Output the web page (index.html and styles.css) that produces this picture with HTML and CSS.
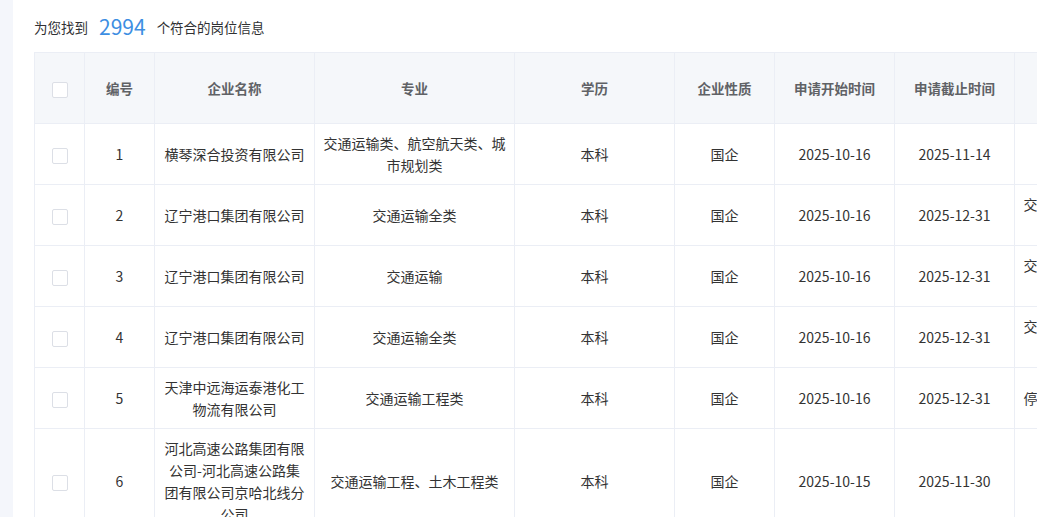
FILE: index.html
```html
<!DOCTYPE html>
<html lang="zh-CN">
<head>
<meta charset="utf-8">
<title>岗位信息</title>
<link rel="stylesheet" href="styles.css">
</head>
<body>
<div class="page">
  <div class="side"></div>
  <div class="main">
    <div class="summary">为您找到<span class="count">2994</span>个符合的岗位信息</div>
    <div class="table-wrap">
      <table class="grid">
        <colgroup>
          <col class="c-check"><col class="c-no"><col class="c-name"><col class="c-major"><col class="c-edu"><col class="c-type"><col class="c-date"><col class="c-date"><col class="c-extra">
        </colgroup>
        <thead>
          <tr>
            <th><span class="checkbox"></span></th>
            <th>编号</th>
            <th>企业名称</th>
            <th>专业</th>
            <th>学历</th>
            <th>企业性质</th>
            <th>申请开始时间</th>
            <th>申请截止时间</th>
            <th class="extra-head"></th>
          </tr>
        </thead>
        <tbody>
          <tr>
            <td><span class="checkbox"></span></td>
            <td>1</td>
            <td>横琴深合投资有限公司</td>
            <td>交通运输类、航空航天类、城市规划类</td>
            <td>本科</td>
            <td>国企</td>
            <td>2025-10-16</td>
            <td>2025-11-14</td>
            <td class="extra"></td>
          </tr>
          <tr>
            <td><span class="checkbox"></span></td>
            <td>2</td>
            <td>辽宁港口集团有限公司</td>
            <td>交通运输全类</td>
            <td>本科</td>
            <td>国企</td>
            <td>2025-10-16</td>
            <td>2025-12-31</td>
            <td class="extra">交通运输类相关专业优先，具备驾驶证</td>
          </tr>
          <tr>
            <td><span class="checkbox"></span></td>
            <td>3</td>
            <td>辽宁港口集团有限公司</td>
            <td>交通运输</td>
            <td>本科</td>
            <td>国企</td>
            <td>2025-10-16</td>
            <td>2025-12-31</td>
            <td class="extra">交通运输类相关专业优先，具备驾驶证</td>
          </tr>
          <tr>
            <td><span class="checkbox"></span></td>
            <td>4</td>
            <td>辽宁港口集团有限公司</td>
            <td>交通运输全类</td>
            <td>本科</td>
            <td>国企</td>
            <td>2025-10-16</td>
            <td>2025-12-31</td>
            <td class="extra">交通运输类相关专业优先，具备驾驶证</td>
          </tr>
          <tr>
            <td><span class="checkbox"></span></td>
            <td>5</td>
            <td>天津中远海运泰港化工物流有限公司</td>
            <td>交通运输工程类</td>
            <td>本科</td>
            <td>国企</td>
            <td>2025-10-16</td>
            <td>2025-12-31</td>
            <td class="extra">停车场管理及危险品运输岗位</td>
          </tr>
          <tr>
            <td><span class="checkbox"></span></td>
            <td>6</td>
            <td>河北高速公路集团有限公司-河北高速公路集团有限公司京哈北线分公司</td>
            <td>交通运输工程、土木工程类</td>
            <td>本科</td>
            <td>国企</td>
            <td>2025-10-15</td>
            <td>2025-11-30</td>
            <td class="extra"></td>
          </tr>
        </tbody>
      </table>
    </div>
  </div>
</div>
</body>
</html>
```

FILE: styles.css
```css
html, body {
  margin: 0;
  padding: 0;
  background: #ffffff;
  height: 100%;
  overflow: hidden;
}

body {
  font-family: "Noto Sans CJK SC", "Noto Sans", sans-serif;
  color: #333333;
  font-size: 14px;
}

.page {
  display: flex;
  min-height: 100%;
}

.side {
  width: 13px;
  flex: none;
  background: #f4f6fb;
}

.main {
  flex: 1;
  min-width: 0;
  padding: 14px 0 0 21px;
  overflow: hidden;
}

.summary {
  height: 26px;
  line-height: 26px;
  font-size: 13.5px;
  color: #303133;
  margin-bottom: 12px;
  white-space: nowrap;
}

.count {
  font-size: 21px;
  color: #3d8ee2;
  margin: 0 11px;
  vertical-align: top;
  line-height: 24px;
}

.table-wrap {
  overflow: hidden;
}

.grid {
  border-collapse: collapse;
  table-layout: fixed;
  width: 1180px;
}

.c-check { width: 50px; }
.c-no { width: 70px; }
.c-name { width: 160px; }
.c-major { width: 200px; }
.c-edu { width: 160px; }
.c-type { width: 100px; }
.c-date { width: 120px; }
.c-extra { width: 200px; }

.grid th,
.grid td {
  border: 1px solid #ebeef5;
  text-align: center;
  vertical-align: middle;
  padding: 8px 8px;
  line-height: 22px;
  box-sizing: border-box;
}

.grid th {
  height: 71px;
  background: #f5f7fa;
  color: #606266;
  font-weight: 600;
  font-size: 13.5px;
}

.grid td {
  height: 61px;
  color: #333333;
}

.checkbox {
  display: inline-block;
  width: 14px;
  height: 14px;
  border: 1px solid #dcdfe6;
  border-radius: 2px;
  background: #ffffff;
  vertical-align: middle;
}
```
